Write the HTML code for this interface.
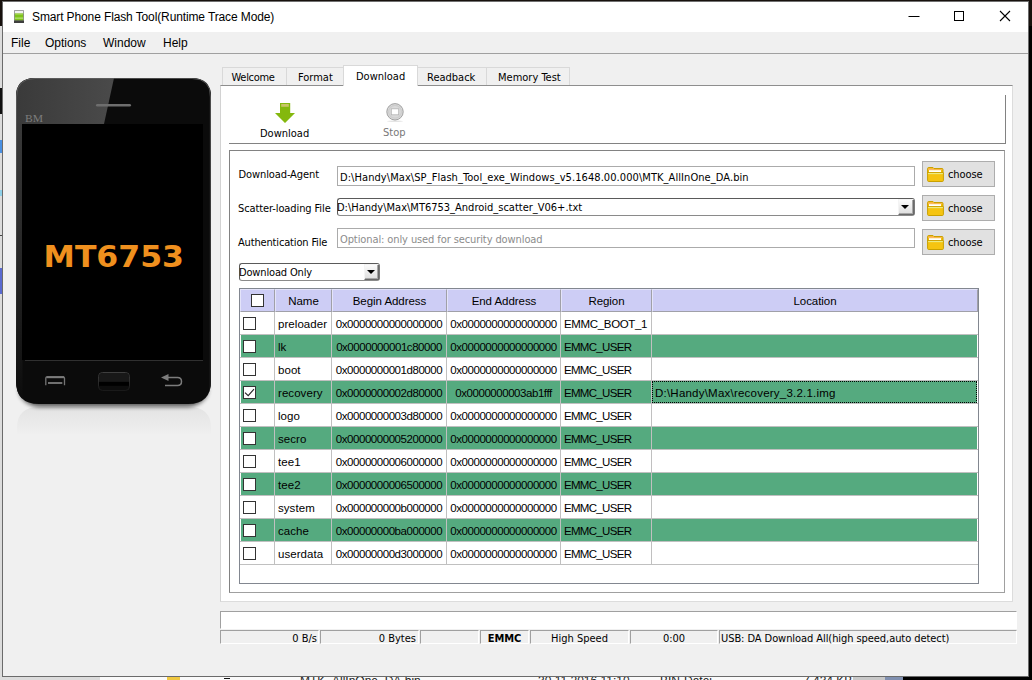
<!DOCTYPE html>
<html lang="en">
<head>
<meta charset="utf-8">
<title>Smart Phone Flash Tool(Runtime Trace Mode)</title>
<style>
*{box-sizing:border-box;margin:0;padding:0}
html,body{width:1032px;height:680px;overflow:hidden;background:#000}
body{position:relative;font-family:"DejaVu Sans Condensed","DejaVu Sans","Liberation Sans",sans-serif;font-stretch:condensed;font-size:11px;color:#000}
.abs{position:absolute}
.t{position:absolute;white-space:nowrap;line-height:16px;height:16px}
.seg{font-family:"Liberation Sans",sans-serif;font-size:12px}
/* desktop behind */
#bgtop{left:0;top:0;width:1032px;height:26px;background:#17110d}
#bgleft{left:0;top:26px;width:3px;height:654px;background:#dcdcdc}
#bgleft i{position:absolute;left:0;display:block}
#bgright{left:1029px;top:26px;width:3px;height:654px;background:#000}
#bgbottom{left:0;top:677px;width:903px;height:3px;overflow:hidden;background:linear-gradient(90deg,#dcdcdc 0,#dcdcdc 100px,#fafafa 100px,#fafafa 853px,#c8c8c8 853px,#c8c8c8 885px,#8090b0 885px,#8090b0 903px)}
#bgbottom span{position:absolute;top:-3.500px;font:12px/14px "Liberation Sans",sans-serif;color:#222;white-space:nowrap}
#bgbottom i{position:absolute;top:0;height:3px;display:block}
/* window */
#win{left:2px;top:1px;width:1027px;height:676px;background:#f0f0f0;border:1px solid #6b6b6b;border-top-color:#707070}
#title{left:3px;top:2px;width:1025px;height:30px;background:#fff}
#menuline{left:3px;top:53px;width:1025px;height:1px;background:#a0a0a0}

/* title bar */
#appicon{left:14px;top:9.500px;width:10px;height:13.500px}
#ttext{left:32px;top:9px;line-height:16px;height:16px;letter-spacing:-0.12px}
.wc{position:absolute;top:10px;width:12px;height:12px}
/* menu */
.menu{top:35px;line-height:16px;height:16px}

/* phone */
#phone{left:10px;top:72px;width:210px;height:370px;font-stretch:normal}

/* tabs */
.tab{position:absolute;top:67px;height:19px;background:#f0f0f0;border:1px solid #d9d9d9;border-bottom:none}
.tab.sel{top:65px;height:21px;background:#fff;z-index:3}
.tabt{top:70px}
#pane{left:220px;top:85px;width:793px;height:517px;background:#fff;border:1px solid #dcdcdc;border-top-color:#8e8e8e;border-left-color:#d2d2d2}
#tbline{left:229px;top:143px;width:777px;height:1px;background:#828282}
#tbright{left:1005px;top:95px;width:1px;height:49px;background:#828282}
#group{left:229px;top:150px;width:776px;height:443px;border:1px solid #a0a0a0;border-top-color:#828282;border-left-color:#828282;background:#fff}
.inp{position:absolute;left:337px;width:578px;height:20px;border:1px solid #ababab;background:#fff}
.btn{position:absolute;left:922px;width:73px;height:26px;border:1px solid #adadad;background:#e1e1e1}
.fold{position:absolute;left:927px;width:17px;height:15px}

.cmb{position:absolute;border:1px solid #5a5a5a;border-radius:3px;background:#fff;border-bottom-color:#8a8a8a;border-right-color:#7a7a7a}
.cbtn{position:absolute;width:15px;height:16px;background:linear-gradient(#fbfbfb,#dedede);border:1px solid #f4f4f4;border-right-color:#6a6a6a;border-bottom-color:#6a6a6a;box-shadow:inset -1px -1px 0 #a6a6a6}
.cbtn:after{content:"";position:absolute;left:2px;top:5px;border:4px solid transparent;border-top:4px solid #000;border-bottom:none}

/* table */
#tbl{left:239px;top:288px;width:740px;height:296px;border:1px solid #828790;background:#fff}
.hc{position:absolute;top:289px;height:23px;background:#cdcdf5;border:1px solid #a0a0a8;border-left-color:#e4e4fa;border-top-color:#e4e4fa}
.ht{top:293px;text-align:center;font-family:"Liberation Sans",sans-serif;font-size:11.5px;letter-spacing:-0.05px}
.row{position:absolute;left:241px;width:736px;height:22px}
.row.g{background:#55aa7f}
.hl{position:absolute;left:240px;width:738px;height:1px;background:#c0c0c0}
.vl{position:absolute;top:312px;width:1px;height:253px;background:#c0c0c0}
.cb{position:absolute;width:13px;height:13px;border:1px solid #333;background:#fff}
.c{position:absolute;white-space:nowrap;line-height:16px;height:16px;margin-top:1px;font-family:"Liberation Sans",sans-serif;font-size:11.5px}
.c.n{left:278px;letter-spacing:0.06px}
.c.a{left:332px;width:114px;text-align:center;letter-spacing:-0.45px}
.c.e{left:447px;width:113px;text-align:center;letter-spacing:-0.45px}
.c.r{left:564px;letter-spacing:-0.69px}

/* status */
#prog{left:220px;top:611px;width:797px;height:18px;background:#fff;border:1px solid #fff;border-top-color:#a0a0a0;border-left-color:#a0a0a0}
.sc{position:absolute;top:630px;height:14px;border:1px solid #fff;border-top-color:#a0a0a0;border-left-color:#a0a0a0;background:#f0f0f0}
.st{top:631px}
</style>
</head>
<body>
<div class="abs" id="bgtop"></div>
<div class="abs" id="bgleft"><i style="top:62px;width:2px;height:26px;background:#111"></i><i style="top:114px;width:3px;height:13px;background:#4a90e2"></i><i style="top:164px;width:2px;height:6px;background:#8fd0e8"></i><i style="top:209px;width:3px;height:1px;background:#444"></i><i style="top:242px;width:2px;height:26px;background:#5a6ad0"></i></div>
<div class="abs" id="bgright"></div>
<div class="abs" id="bgbottom"><i style="left:167px;width:13px;background:#f0c840"></i><i style="left:224px;width:6px;top:1px;height:1px;background:#111"></i><span style="left:300px">MTK_AllInOne_DA.bin</span><span style="left:538px">30.11.2016 11:10</span><span style="left:660px">BIN-Datei</span><span style="left:803px">7.434 KB</span></div>
<div class="abs" id="win"></div>
<div class="abs" id="title"></div>
<div class="abs" id="menuline"></div>

<svg class="abs" id="appicon" viewBox="0 0 10 13.500"><rect x="0" y="0" width="10" height="13.500" rx="1" fill="#8c8c8c"/><rect x="0.800" y="0.800" width="8.400" height="3" fill="#f1f1f1"/><rect x="0.800" y="3.300" width="8.400" height="7.200" fill="#7fc41a"/><rect x="1.200" y="3.300" width="7.600" height="1.200" fill="#b5d87a"/><rect x="0.800" y="7.600" width="8.400" height="1" fill="#c4e690"/><rect x="0" y="10.500" width="10" height="3" rx="0.600" fill="#3f3f3f"/></svg>
<div class="t seg" id="ttext">Smart Phone Flash Tool(Runtime Trace Mode)</div>
<svg class="wc" style="left:908px" viewBox="0 0 12 12"><path d="M0.5 6.5H11.5" stroke="#000" stroke-width="1" fill="none"/></svg>
<svg class="wc" style="left:953px" viewBox="0 0 12 12"><rect x="1.5" y="1.5" width="9" height="9" stroke="#000" stroke-width="1" fill="none"/></svg>
<svg class="wc" style="left:999px" viewBox="0 0 12 12"><path d="M1 1L11 11M11 1L1 11" stroke="#000" stroke-width="1.1" fill="none"/></svg>
<div class="t seg menu" style="left:11px">File</div>
<div class="t seg menu" style="left:45px">Options</div>
<div class="t seg menu" style="left:103px">Window</div>
<div class="t seg menu" style="left:163px">Help</div>

<svg class="abs" id="phone" viewBox="0 0 210 370">
<defs>
<linearGradient id="gl" x1="0" y1="0" x2="1" y2="0"><stop offset="0" stop-color="#3a3a3a"/><stop offset="1" stop-color="#4a4a4a"/></linearGradient>
<linearGradient id="le" x1="0" y1="0" x2="0" y2="1"><stop offset="0" stop-color="#404040"/><stop offset="0.400" stop-color="#2e2e2e"/><stop offset="0.850" stop-color="#151515"/><stop offset="1" stop-color="#0b0b0b"/></linearGradient>
<linearGradient id="rf" x1="0" y1="0" x2="0" y2="1"><stop offset="0" stop-color="#e3e3e3"/><stop offset="1" stop-color="#efefef"/></linearGradient>
<linearGradient id="hb" x1="0" y1="0" x2="0" y2="1"><stop offset="0" stop-color="#3e3e3e"/><stop offset="1" stop-color="#1a1a1a"/></linearGradient>
<filter id="bl" x="-10%" y="-10%" width="120%" height="130%"><feGaussianBlur stdDeviation="2"/></filter>
<clipPath id="pc"><path d="M25 6H182Q201 6 201 25V309Q201 332 178 332H29Q6 332 6 309V25Q6 6 25 6Z"/></clipPath>
<linearGradient id="es" x1="0" y1="0" x2="0" y2="1"><stop offset="0" stop-color="#666" stop-opacity="0.700"/><stop offset="0.500" stop-color="#555" stop-opacity="0.450"/><stop offset="0.900" stop-color="#333" stop-opacity="0"/></linearGradient>
</defs>
<path d="M7 362V356Q7 335 29 335H179Q201 335 201 356V362Z" fill="url(#rf)"/>
<rect x="9" y="301" width="189" height="34" rx="22" fill="#000" opacity="0.600" filter="url(#bl)"/>
<path d="M25 6H182Q201 6 201 25V309Q201 332 178 332H29Q6 332 6 309V25Q6 6 25 6Z" fill="#0b0b0b"/>
<g clip-path="url(#pc)">
<rect x="6" y="6" width="6.500" height="326" fill="url(#le)"/>
<polygon points="6,6 104,6 94,52 6,52" fill="url(#gl)"/>
<rect x="199.500" y="6" width="1.500" height="326" fill="#1c1c1c"/>
</g>
<path d="M25 6.500H182Q200.500 6.500 200.500 25V309Q200.500 331.500 178 331.500H29Q6.500 331.500 6.500 309V25Q6.500 6.500 25 6.500Z" fill="none" stroke="url(#es)" stroke-width="1"/>
<rect x="86" y="32" width="35" height="2.600" rx="1.300" fill="#6e6e6e"/>
<text x="15" y="50" font-family="Liberation Serif,serif" font-size="10" fill="#7c7c7c" textLength="18" lengthAdjust="spacingAndGlyphs">BM</text>
<rect x="12" y="52" width="181" height="236" fill="#000"/>
<rect x="15" y="288" width="178" height="0.800" fill="#3a3a3a"/>
<text x="103.800" y="195" text-anchor="middle" font-family="DejaVu Sans,Liberation Sans,sans-serif" font-weight="bold" font-size="30" fill="#f0901e" textLength="140.500" lengthAdjust="spacingAndGlyphs">MT6753</text>
<path d="M35.800 313.300V306Q35.800 304.800 37 304.800H53.300Q54.500 304.800 54.500 306V313.300" fill="none" stroke="#747474" stroke-width="1.300"/><path d="M36.500 305.200H54" stroke="#7c7c7c" stroke-width="2" fill="none"/>
<path d="M38 311H52.300" stroke="#7c7c7c" stroke-width="1.800" fill="none"/>
<rect x="88.500" y="300.500" width="31" height="18" rx="4" fill="#0d0d0d" stroke="url(#hb)" stroke-width="1"/><rect x="89" y="309.800" width="30" height="4" fill="#000"/>
<path d="M89 309.800V304.500Q89 301 92.500 301H115.500Q119 301 119 304.500V309.800Z" fill="#181818"/>
<path d="M157 305.500H167.500Q171.500 305.500 171.500 309.500Q171.500 313.500 167.500 313.500H155" fill="none" stroke="#7c7c7c" stroke-width="1.500"/>
<path d="M151 305.500L158.500 302V309Z" fill="#7c7c7c"/>
</svg>

<!-- tabs -->
<div class="tab" style="left:222px;width:65px"></div>
<div class="tab" style="left:286px;width:58px"></div>
<div class="tab" style="left:417px;width:70px"></div>
<div class="tab" style="left:486px;width:84px"></div>
<div class="abs" id="pane"></div>
<div class="tab sel" style="left:343px;width:75px"></div>
<div class="t tabt" style="left:231.500px;letter-spacing:-0.3px">Welcome</div>
<div class="t tabt" style="left:298px">Format</div>
<div class="t tabt" style="left:356px;top:69px;z-index:4">Download</div>
<div class="t tabt" style="left:427px">Readback</div>
<div class="t tabt" style="left:498px">Memory Test</div>
<!-- toolbar -->
<svg class="abs" style="left:274px;top:102px;width:22px;height:22px" viewBox="0 0 22 22"><path d="M6 1H16.200V11H21L11 21L1 11H6Z" fill="#84b80e"/><rect x="7.200" y="2" width="7.600" height="2.800" fill="#c8c468"/></svg>
<div class="t" style="left:260px;top:126px">Download</div>
<svg class="abs" style="left:385px;top:102px;width:20px;height:22px" viewBox="0 0 20 22"><ellipse cx="10" cy="19.300" rx="8" ry="0.800" fill="#e4e4e4"/><circle cx="10" cy="9.800" r="8.200" fill="#dadada" stroke="#a2a2a2" stroke-width="1"/><circle cx="10" cy="9.800" r="6.400" fill="none" stroke="#cdcdcd" stroke-width="1.200"/><rect x="6.300" y="6.800" width="7.400" height="6" fill="#fff" stroke="#b4b4b4" stroke-width="0.800"/></svg>
<div class="t" style="left:383px;top:125px;color:#787878">Stop</div>
<div class="abs" id="tbline"></div>
<div class="abs" id="tbright"></div>
<div class="abs" id="group"></div>

<!-- form -->
<div class="t" style="left:238.500px;top:167px;letter-spacing:-0.1px">Download-Agent</div>
<div class="t" style="left:238px;top:201px;letter-spacing:-0.1px">Scatter-loading File</div>
<div class="t" style="left:238px;top:235px;letter-spacing:-0.16px">Authentication File</div>
<div class="inp" style="top:166px"></div>
<div class="inp" style="top:228px"></div>
<div class="cmb" style="left:337px;top:198px;width:578px;height:18px"></div>
<div class="cbtn" style="left:898px;top:199px;width:16px"></div>
<div class="t" style="left:340px;top:170px;letter-spacing:0.07px">D:\Handy\Max\SP_Flash_Tool_exe_Windows_v5.1648.00.000\MTK_AllInOne_DA.bin</div>
<div class="t" style="left:337px;top:200px">D:\Handy\Max\MT6753_Android_scatter_V06+.txt</div>
<div class="t" style="left:340px;top:232px;color:#8c8c8c;letter-spacing:-0.1px">Optional: only used for security download</div>
<div class="btn" style="top:161px"></div><svg class="fold" style="top:167px" viewBox="0 0 17 15"><path d="M0.600 1.600Q0.600 0.500 1.700 0.500H6L7 1.500H15Q16 1.500 16 2.500V6H0.600Z" fill="#f6c000" stroke="#c9a000" stroke-width="1"/><path d="M1.200 1.500H6.400L7 2.300H15.300V3H1.200Z" fill="#fbb466"/><rect x="2" y="3.200" width="12" height="2" fill="#fff"/><path d="M0.600 5.700H16.400V13.400Q16.400 14.500 15.300 14.500H1.700Q0.600 14.500 0.600 13.400Z" fill="#f5c411" stroke="#c9a000" stroke-width="1"/><rect x="1.100" y="6.200" width="14.800" height="0.900" fill="#eaf7a0"/></svg><div class="t" style="left:948px;top:167px;letter-spacing:-0.1px">choose</div>
<div class="btn" style="top:195px"></div><svg class="fold" style="top:201px" viewBox="0 0 17 15"><path d="M0.600 1.600Q0.600 0.500 1.700 0.500H6L7 1.500H15Q16 1.500 16 2.500V6H0.600Z" fill="#f6c000" stroke="#c9a000" stroke-width="1"/><path d="M1.200 1.500H6.400L7 2.300H15.300V3H1.200Z" fill="#fbb466"/><rect x="2" y="3.200" width="12" height="2" fill="#fff"/><path d="M0.600 5.700H16.400V13.400Q16.400 14.500 15.300 14.500H1.700Q0.600 14.500 0.600 13.400Z" fill="#f5c411" stroke="#c9a000" stroke-width="1"/><rect x="1.100" y="6.200" width="14.800" height="0.900" fill="#eaf7a0"/></svg><div class="t" style="left:948px;top:201px;letter-spacing:-0.1px">choose</div>
<div class="btn" style="top:229px"></div><svg class="fold" style="top:235px" viewBox="0 0 17 15"><path d="M0.600 1.600Q0.600 0.500 1.700 0.500H6L7 1.500H15Q16 1.500 16 2.500V6H0.600Z" fill="#f6c000" stroke="#c9a000" stroke-width="1"/><path d="M1.200 1.500H6.400L7 2.300H15.300V3H1.200Z" fill="#fbb466"/><rect x="2" y="3.200" width="12" height="2" fill="#fff"/><path d="M0.600 5.700H16.400V13.400Q16.400 14.500 15.300 14.500H1.700Q0.600 14.500 0.600 13.400Z" fill="#f5c411" stroke="#c9a000" stroke-width="1"/><rect x="1.100" y="6.200" width="14.800" height="0.900" fill="#eaf7a0"/></svg><div class="t" style="left:948px;top:235px;letter-spacing:-0.1px">choose</div>

<div class="cmb" style="left:239px;top:263px;width:141px;height:18px"></div>
<div class="cbtn" style="left:364px;top:264px"></div>
<div class="t" style="left:239px;top:265px;letter-spacing:-0.15px">Download Only</div>
<!-- table -->
<div class="abs" id="tbl"></div>
<div class="hc" style="left:240px;width:35px"></div><div class="hc" style="left:275px;width:57px"></div><div class="t ht" style="left:275px;width:57px">Name</div>
<div class="hc" style="left:332px;width:115px"></div><div class="t ht" style="left:332px;width:115px">Begin Address</div>
<div class="hc" style="left:447px;width:114px"></div><div class="t ht" style="left:447px;width:114px">End Address</div>
<div class="hc" style="left:561px;width:91px"></div><div class="t ht" style="left:561px;width:91px">Region</div>
<div class="hc" style="left:652px;width:326px"></div><div class="t ht" style="left:652px;width:326px">Location</div>
<div class="cb" style="left:251px;top:294px"></div>
<div class="row" style="top:312px"></div><div class="hl" style="top:334px"></div><div class="cb" style="left:243px;top:317px"></div><div class="c n" style="top:315px">preloader</div><div class="c a" style="top:315px">0x0000000000000000</div><div class="c e" style="top:315px">0x0000000000000000</div><div class="c r" style="top:315px;letter-spacing:-0.34px">EMMC_BOOT_1</div>
<div class="row g" style="top:335px"></div><div class="hl" style="top:357px"></div><div class="cb" style="left:243px;top:340px"></div><div class="c n" style="top:338px">lk</div><div class="c a" style="top:338px">0x0000000001c80000</div><div class="c e" style="top:338px">0x0000000000000000</div><div class="c r" style="top:338px">EMMC_USER</div>
<div class="row" style="top:358px"></div><div class="hl" style="top:380px"></div><div class="cb" style="left:243px;top:363px"></div><div class="c n" style="top:361px">boot</div><div class="c a" style="top:361px">0x0000000001d80000</div><div class="c e" style="top:361px">0x0000000000000000</div><div class="c r" style="top:361px">EMMC_USER</div>
<div class="row g" style="top:381px"></div><div class="hl" style="top:403px"></div><div class="cb" style="left:243px;top:386px"></div><div class="c n" style="top:384px">recovery</div><div class="c a" style="top:384px">0x0000000002d80000</div><div class="c e" style="top:384px">0x0000000003ab1fff</div><div class="c r" style="top:384px">EMMC_USER</div>
<div class="row" style="top:404px"></div><div class="hl" style="top:426px"></div><div class="cb" style="left:243px;top:409px"></div><div class="c n" style="top:407px">logo</div><div class="c a" style="top:407px">0x0000000003d80000</div><div class="c e" style="top:407px">0x0000000000000000</div><div class="c r" style="top:407px">EMMC_USER</div>
<div class="row g" style="top:427px"></div><div class="hl" style="top:449px"></div><div class="cb" style="left:243px;top:432px"></div><div class="c n" style="top:430px">secro</div><div class="c a" style="top:430px">0x0000000005200000</div><div class="c e" style="top:430px">0x0000000000000000</div><div class="c r" style="top:430px">EMMC_USER</div>
<div class="row" style="top:450px"></div><div class="hl" style="top:472px"></div><div class="cb" style="left:243px;top:455px"></div><div class="c n" style="top:453px">tee1</div><div class="c a" style="top:453px">0x0000000006000000</div><div class="c e" style="top:453px">0x0000000000000000</div><div class="c r" style="top:453px">EMMC_USER</div>
<div class="row g" style="top:473px"></div><div class="hl" style="top:495px"></div><div class="cb" style="left:243px;top:478px"></div><div class="c n" style="top:476px">tee2</div><div class="c a" style="top:476px">0x0000000006500000</div><div class="c e" style="top:476px">0x0000000000000000</div><div class="c r" style="top:476px">EMMC_USER</div>
<div class="row" style="top:496px"></div><div class="hl" style="top:518px"></div><div class="cb" style="left:243px;top:501px"></div><div class="c n" style="top:499px">system</div><div class="c a" style="top:499px">0x000000000b000000</div><div class="c e" style="top:499px">0x0000000000000000</div><div class="c r" style="top:499px">EMMC_USER</div>
<div class="row g" style="top:519px"></div><div class="hl" style="top:541px"></div><div class="cb" style="left:243px;top:524px"></div><div class="c n" style="top:522px">cache</div><div class="c a" style="top:522px">0x00000000ba000000</div><div class="c e" style="top:522px">0x0000000000000000</div><div class="c r" style="top:522px">EMMC_USER</div>
<div class="row" style="top:542px"></div><div class="hl" style="top:564px"></div><div class="cb" style="left:243px;top:547px"></div><div class="c n" style="top:545px">userdata</div><div class="c a" style="top:545px">0x00000000d3000000</div><div class="c e" style="top:545px">0x0000000000000000</div><div class="c r" style="top:545px">EMMC_USER</div>
<div class="vl" style="left:274px"></div><div class="vl" style="left:331px"></div><div class="vl" style="left:446px"></div><div class="vl" style="left:560px"></div><div class="vl" style="left:651px"></div>
<svg class="abs" style="left:244px;top:386px;width:13px;height:13px" viewBox="0 0 13 13"><path d="M1 6.600L4.200 9.700L10 3.200" fill="none" stroke="#222" stroke-width="1.100"/></svg>
<div class="abs" style="left:652px;top:381px;width:325px;height:22px;border:1px dotted #000"></div>
<div class="c" style="left:655px;top:384px;letter-spacing:0.22px">D:\Handy\Max\recovery_3.2.1.img</div>
<!-- status -->
<div class="abs" id="prog"></div>
<div class="sc" style="left:220px;width:99px"></div><div class="sc" style="left:320px;width:99px"></div><div class="sc" style="left:420px;width:59px"></div><div class="sc" style="left:480px;width:49px"></div><div class="sc" style="left:530px;width:99px"></div><div class="sc" style="left:630px;width:88px"></div><div class="sc" style="left:719px;width:298px"></div>
<div class="t st" style="left:220px;width:97px;text-align:right">0 B/s</div>
<div class="t st" style="left:320px;width:96px;text-align:right">0 Bytes</div>
<div class="t st" style="left:480px;width:49px;text-align:center;font-weight:bold">EMMC</div>
<div class="t st" style="left:530px;width:99px;text-align:center">High Speed</div>
<div class="t st" style="left:630px;width:88px;text-align:center">0:00</div>
<div class="t st" style="left:721px;letter-spacing:-0.07px">USB: DA Download All(high speed,auto detect)</div>
</body>
</html>
